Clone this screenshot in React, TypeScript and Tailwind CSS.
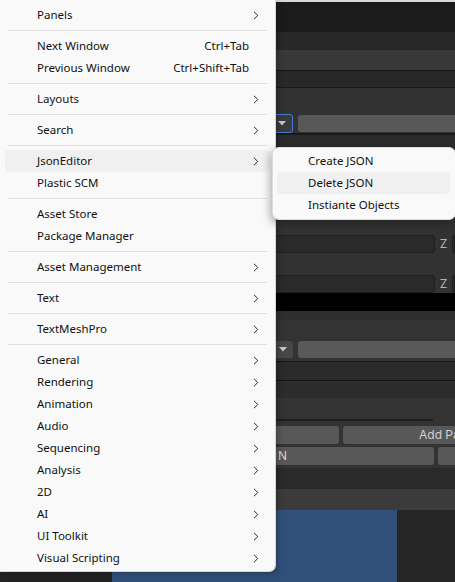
import React from 'react';

type Item =
  | { kind: 'sep' }
  | { kind: 'item'; label: string; shortcut?: string; sub?: boolean; active?: boolean };

const items: Item[] = [
  { kind: 'item', label: 'Panels', sub: true },
  { kind: 'sep' },
  { kind: 'item', label: 'Next Window', shortcut: 'Ctrl+Tab' },
  { kind: 'item', label: 'Previous Window', shortcut: 'Ctrl+Shift+Tab' },
  { kind: 'sep' },
  { kind: 'item', label: 'Layouts', sub: true },
  { kind: 'sep' },
  { kind: 'item', label: 'Search', sub: true },
  { kind: 'sep' },
  { kind: 'item', label: 'JsonEditor', sub: true, active: true },
  { kind: 'item', label: 'Plastic SCM' },
  { kind: 'sep' },
  { kind: 'item', label: 'Asset Store' },
  { kind: 'item', label: 'Package Manager' },
  { kind: 'sep' },
  { kind: 'item', label: 'Asset Management', sub: true },
  { kind: 'sep' },
  { kind: 'item', label: 'Text', sub: true },
  { kind: 'sep' },
  { kind: 'item', label: 'TextMeshPro', sub: true },
  { kind: 'sep' },
  { kind: 'item', label: 'General', sub: true },
  { kind: 'item', label: 'Rendering', sub: true },
  { kind: 'item', label: 'Animation', sub: true },
  { kind: 'item', label: 'Audio', sub: true },
  { kind: 'item', label: 'Sequencing', sub: true },
  { kind: 'item', label: 'Analysis', sub: true },
  { kind: 'item', label: '2D', sub: true },
  { kind: 'item', label: 'AI', sub: true },
  { kind: 'item', label: 'UI Toolkit', sub: true },
  { kind: 'item', label: 'Visual Scripting', sub: true },
];

const subItems = ['Create JSON', 'Delete JSON', 'Instiante Objects'];

const Chevron = () => (
  <svg width="6" height="9" viewBox="0 0 6 9" className="shrink-0">
    <polyline points="1,0.8 4.8,4.5 1,8.2" fill="none" stroke="#2b2b2b" strokeWidth="1" />
  </svg>
);

const Caret = () => (
  <svg width="8" height="5" viewBox="0 0 8 5">
    <polygon points="0,0 8,0 4,4.5" fill="#c8c8c8" />
  </svg>
);

function EditorBackground() {
  return (
    <div className="flex flex-col w-[455px] h-[582px] font-['Inter',sans-serif]">
      <div className="h-[2px] bg-[#d9d9d9]" />
      <div className="h-[30px] bg-[#1b1b1b]" />
      <div className="h-[18px] bg-[#282828]" />
      <div className="h-[20px] bg-[#383838]" />
      <div className="h-px bg-[#151515]" />
      <div className="h-[16px] bg-[#282828]" />
      <div className="h-px bg-[#1a1a1a]" />
      <div className="h-[25px] bg-[#323232]" />
      {/* dropdown row */}
      <div className="h-[20px] bg-[#323232] flex items-center pl-[200px] gap-[5px]">
        <div className="w-[93px] h-[19px] rounded-[3px] border border-[#3f7bd0] bg-[#3a3a3a] flex items-center justify-end pr-[6px]">
          <Caret />
        </div>
        <div className="flex-1 h-[17px] rounded-l-[3px] bg-[#585858]" />
      </div>
      <div className="h-[2px] bg-[#191919]" />
      <div className="h-[12px] bg-[#2b2b2b]" />
      <div className="h-[71px] bg-[#303030]" />
      <div className="h-[16px] bg-[#323232]" />
      <div className="h-[19px] bg-[#323232] flex items-center">
        <div className="w-[435px] h-[18px] rounded-r-[3px] bg-[#2a2a2a] border border-[#1f1f1f]" />
        <span className="w-[17px] text-center text-[12px] text-[#b4b4b4]">Z</span>
        <div className="flex-1 h-[18px] rounded-l-[3px] bg-[#2a2a2a] border border-[#1f1f1f]" />
      </div>
      <div className="h-[21px] bg-[#323232]" />
      <div className="h-[19px] bg-[#323232] flex items-center">
        <div className="w-[435px] h-[18px] rounded-r-[3px] bg-[#2a2a2a] border border-[#1f1f1f]" />
        <span className="w-[17px] text-center text-[12px] text-[#b4b4b4]">Z</span>
        <div className="flex-1 h-[18px] rounded-l-[3px] bg-[#2a2a2a] border border-[#1f1f1f]" />
      </div>
      <div className="h-[18px] bg-black" />
      <div className="h-[9px] bg-[#2e2e2e]" />
      <div className="h-[20px] bg-[#333333]" />
      {/* second dropdown row */}
      <div className="h-[19px] bg-[#333333] flex items-center pl-[200px] gap-[5px]">
        <div className="w-[93px] h-[17px] rounded-[3px] bg-[#474747] flex items-center justify-end pr-[6px]">
          <Caret />
        </div>
        <div className="flex-1 h-[17px] rounded-l-[3px] bg-[#595959]" />
      </div>
      <div className="h-[2px] bg-[#333333]" />
      <div className="h-px bg-[#151515]" />
      <div className="h-[18px] bg-[#2a2a2a]" />
      <div className="h-px bg-[#161616]" />
      <div className="h-[17px] bg-[#2c2c2c]" />
      <div className="h-[21px] bg-[#333333]" />
      <div className="h-[2px] bg-[#333333] flex">
        <div className="w-[433px] bg-[#1c1c1c] rounded-br-[2px]" />
      </div>
      <div className="h-[5px] bg-[#333333]" />
      {/* buttons */}
      <div className="h-[18px] bg-[#333333] flex gap-[4px]">
        <div className="w-[339px] rounded-r-[3px] bg-[#585858]" />
        <div className="flex-1 rounded-l-[3px] bg-[#585858] flex items-center pl-[76px] text-[12px] text-[#d2d2d2] whitespace-nowrap overflow-hidden">
          Add Panel
        </div>
      </div>
      <div className="h-[3px] bg-[#333333]" />
      <div className="h-[18px] bg-[#333333] flex gap-[4px]">
        <div className="w-[434px] rounded-r-[3px] bg-[#585858] flex items-center justify-end pr-[147px] text-[12px] text-[#d2d2d2]">
          N
        </div>
        <div className="flex-1 rounded-l-[3px] bg-[#585858]" />
      </div>
      <div className="h-[3px] bg-[#333333]" />
      <div className="h-[21px] bg-[#2a2a2a]" />
      <div className="h-[21px] bg-[#3b3b3b]" />
      <div className="flex-1 flex">
        <div className="w-[112px] bg-[#232323]" />
        <div className="w-[285px] bg-[#30507a]" />
        <div className="flex-1 bg-[#262626]" />
      </div>
    </div>
  );
}

function MainMenu() {
  return (
    <div className="absolute left-0 top-0 w-[276px] pt-[4px] pb-[2px] bg-[#f9f9f9] border-r border-b border-[#d6d6d6] rounded-br-[7px] shadow-[2px_2px_6px_rgba(0,0,0,0.25)]">
      {items.map((it, i) =>
        it.kind === 'sep' ? (
          <div key={i} className="mx-[8px] my-[4px] h-px bg-[#e0e0e0]" />
        ) : (
          <div
            key={i}
            className={
              'mx-[5px] h-[22px] rounded-[4px] flex items-center pl-[32px] pr-[11px] ' +
              (it.active ? 'bg-[#f0f0f0]' : '')
            }
          >
            <span className="flex-1">{it.label}</span>
            {it.shortcut && <span className="mr-[10px]">{it.shortcut}</span>}
            {it.sub && <Chevron />}
          </div>
        )
      )}
    </div>
  );
}

function SubMenu() {
  return (
    <div className="absolute left-[272px] top-[147px] w-[184px] pt-[2px] pb-[3px] bg-[#f9f9f9] border border-[#dcdcdc] rounded-[7px] shadow-[-2px_3px_8px_rgba(0,0,0,0.3)]">
      {subItems.map((s) => (
        <div
          key={s}
          className={
            'ml-[4px] mr-[5px] h-[22px] rounded-[4px] flex items-center pl-[31px] ' +
            (s === 'Delete JSON' ? 'bg-[#f0f0f0]' : '')
          }
        >
          {s}
        </div>
      ))}
    </div>
  );
}

export default function App() {
  return (
    <div className="relative w-[455px] h-[582px] overflow-hidden text-[11.5px] text-[#111111] font-['Noto_Sans','Open_Sans',sans-serif]">
      <EditorBackground />
      <MainMenu />
      <SubMenu />
    </div>
  );
}
